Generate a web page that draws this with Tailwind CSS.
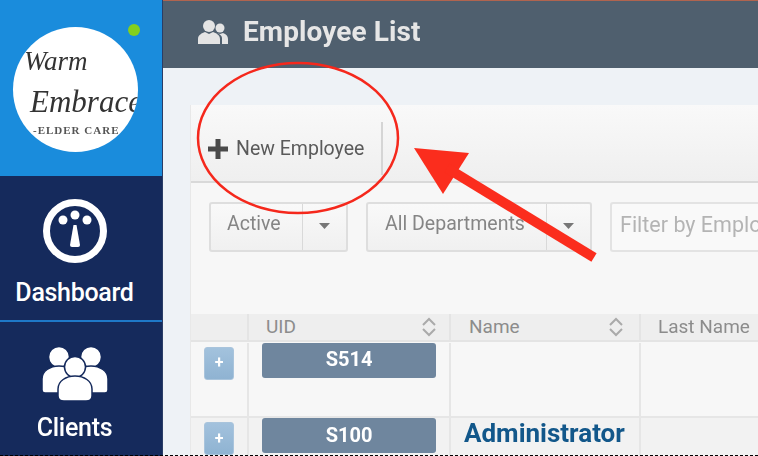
<!DOCTYPE html>
<html>
<head>
<meta charset="utf-8">
<script src="https://cdn.jsdelivr.net/npm/@tailwindcss/browser@4"></script>
</head>
<body class="m-0">
<div class="relative w-[758px] h-[456px] overflow-hidden bg-[#eef2f6] font-['Roboto',sans-serif]">
  <div class="flex w-full h-full blur-[0.6px]">
    <aside class="w-[163px] shrink-0 flex flex-col bg-[#152a5c] text-white border-r border-[#2a3d66]">
      <div class="relative h-[176px] bg-[#1a8cdc] pt-[27px] pl-[13px]">
        <div class="w-[125px] h-[125px] rounded-full bg-white overflow-hidden relative text-[#333] font-['Liberation_Serif',serif]">
          <div class="pt-[20px] pl-[11px] italic text-[27px] leading-[28px] whitespace-nowrap">Warm</div>
          <div class="pl-[17px] mt-[11px] italic text-[31px] leading-[32px] whitespace-nowrap">Embrace</div>
          <div class="pl-[20px] mt-[5px] text-[11px] leading-[14px] tracking-[1px] font-bold whitespace-nowrap text-[#555]">-ELDER CARE</div>
        </div>
        <div class="absolute left-[128px] top-[24px] w-3 h-3 rounded-full bg-[#84cf1e]"></div>
      </div>
      <div class="h-[146px] flex flex-col items-center border-b-2 border-[#1e78c8] pr-[13px]">
        <svg class="mt-[22px]" width="66" height="66" viewBox="0 0 66 66" fill="white">
          <circle cx="33" cy="33" r="28.500" fill="none" stroke="white" stroke-width="7"/>
          <circle cx="21" cy="22" r="4.500"/><circle cx="33" cy="17" r="4.500"/><circle cx="45" cy="22" r="4.500"/>
          <path d="M31.500 27h3l3.500 20q0 2-2 2h-6q-2 0-2-2z"/>
        </svg>
        <div class="mt-[14px] text-[25px] leading-[30px] font-medium tracking-[-0.3px]">Dashboard</div>
      </div>
      <div class="flex-1 flex flex-col items-center pr-[13px]">
        <svg class="mt-[24px]" width="68" height="58" viewBox="-1 0 68 58" fill="white" stroke="#152a5c" stroke-width="1.500">
          <circle cx="17" cy="11" r="10.500"/><circle cx="49" cy="11" r="10.500"/>
          <path d="M0 33c0-8 8-13 17-13s16 5 16 13v14H3q-3 0-3-3z"/>
          <path d="M66 33c0-8-8-13-17-13s-16 5-16 13v14h30q3 0 3-3z"/>
          <circle cx="33" cy="21" r="10.500"/>
          <path d="M16 43c0-8 8-13 17-13s17 5 17 13v7q0 5-6 5H22q-6 0-6-5z"/>
        </svg>
        <div class="mt-[9px] text-[25px] leading-[30px] font-medium tracking-[-0.3px]">Clients</div>
      </div>
    </aside>
    <main class="flex-1 min-w-0 flex flex-col">
      <header class="h-[68px] shrink-0 bg-[#4f5f6e] flex items-center pl-[35px] pb-[6px] border-t border-[#b0644f]">
        <svg width="30" height="26" viewBox="0 0 30 26" fill="#e4e4e4">
          <circle cx="11" cy="7" r="6"/>
          <path d="M0 25v-5c0-4 4-6 7-7l4 2 4-2c3 1 7 3 7 7v5z"/>
          <circle cx="22" cy="9" r="4.500"/>
          <path d="M19 14l3 1 3-1c3 1 5 3 5 6v5h-6v-6c0-2-2-4-5-5z"/>
        </svg>
        <h1 class="ml-[15px] text-[28px] leading-none font-bold text-[#e6e6e6] tracking-[0.1px]">Employee List</h1>
      </header>
      <section class="ml-[27px] mt-[37px] flex-1 min-h-0 bg-[#f7f7f7] border-l border-[#e8e8e8] flex flex-col">
        <div class="h-[78px] shrink-0 border-b-2 border-[#d9d9d9] bg-gradient-to-b from-[#f9f9f9] to-[#efefef] pt-[17px]">
          <div class="w-[192px] h-[53px] border-r-2 border-[#d5d5d5] flex items-center pl-[17px]">
            <svg width="20" height="20" viewBox="0 0 20 20" fill="#4a4a4a"><path d="M7.500 0h5v7.500H20v5h-7.500V20h-5v-7.500H0v-5h7.500z"/></svg>
            <span class="ml-[8px] text-[19.5px] leading-none text-[#5a5a5a]">New Employee</span>
          </div>
        </div>
        <div class="h-[131px] shrink-0 flex gap-[18px] pt-[19px] pl-[18px]">
          <div class="w-[139px] h-[50px] rounded-[3px] border-2 border-[#dedede] bg-gradient-to-b from-[#f9f9f9] to-[#f0f0f0] flex">
            <div class="w-[92px] flex items-center pl-[16px] pb-[6px] text-[19.5px] text-[#858585] border-r border-[#d9d9d9]">Active</div>
            <div class="flex-1 flex items-center justify-center pb-[2px]"><div class="w-[11px] h-[6px] bg-[#777] [clip-path:polygon(0_0,100%_0,50%_100%)]"></div></div>
          </div>
          <div class="w-[226px] h-[50px] rounded-[3px] border-2 border-[#dedede] bg-gradient-to-b from-[#f9f9f9] to-[#f0f0f0] flex">
            <div class="w-[179px] flex items-center pl-[17px] pb-[6px] text-[19.5px] text-[#858585] border-r border-[#d9d9d9] whitespace-nowrap">All Departments</div>
            <div class="flex-1 flex items-center justify-center pb-[2px]"><div class="w-[11px] h-[6px] bg-[#777] [clip-path:polygon(0_0,100%_0,50%_100%)]"></div></div>
          </div>
          <div class="flex-1 h-[50px] rounded-l-[3px] border-2 border-r-0 border-[#e3e3e3] bg-[#f9f9f9] flex items-center pl-[8px] pb-[4px] text-[21.5px] text-[#b4b4b4] whitespace-nowrap overflow-hidden">Filter by Employee</div>
        </div>
        <div class="grid grid-cols-[58px_202px_190px_1fr] flex-1 min-h-0 text-[19px]">
          <div class="h-[28px] bg-[#eeeeee] border-b-2 border-r-2 border-[#e4e4e4]"></div>
          <div class="h-[28px] bg-[#eeeeee] border-b-2 border-r-2 border-[#e4e4e4] flex items-center justify-between pl-[17px] pr-[13px] text-[#8c8c8c]">
            <span>UID</span>
            <svg width="14" height="20" viewBox="0 0 14 20" fill="none" stroke="#aaa" stroke-width="2"><path d="M1 8l6-6 6 6M1 12l6 6 6-6"/></svg>
          </div>
          <div class="h-[28px] bg-[#eeeeee] border-b-2 border-r-2 border-[#e4e4e4] flex items-center justify-between pl-[18px] pr-[16px] text-[#8c8c8c]">
            <span>Name</span>
            <svg width="14" height="20" viewBox="0 0 14 20" fill="none" stroke="#aaa" stroke-width="2"><path d="M1 8l6-6 6 6M1 12l6 6 6-6"/></svg>
          </div>
          <div class="h-[28px] bg-[#eeeeee] border-b-2 border-[#e4e4e4] flex items-center pl-[17px] text-[#8c8c8c] whitespace-nowrap">Last Name</div>

          <div class="h-[75px] border-r-2 border-b-2 border-[#e6e6e6] pl-[13px] pt-[4px]">
            <div class="w-[30px] h-[33px] rounded-[3px] border border-[#a9c4dc] bg-gradient-to-b from-[#a3c2dd] to-[#8fb3d2] flex items-center justify-center text-white text-[16px] font-bold leading-none">+</div>
          </div>
          <div class="h-[75px] border-r-2 border-b-2 border-[#e6e6e6] pl-[13px]">
            <div class="w-[174px] h-[35px] rounded-[3px] bg-[#6f869e] text-white font-bold text-[20px] pb-[3px] flex items-center justify-center">S514</div>
          </div>
          <div class="h-[75px] border-r-2 border-b-2 border-[#e6e6e6]"></div>
          <div class="h-[75px] border-b-2 border-[#e6e6e6]"></div>

          <div class="bg-[#f2f2f2] border-r-2 border-[#e6e6e6] pl-[13px] pt-[4px]">
            <div class="w-[30px] h-[33px] rounded-[3px] border border-[#a9c4dc] bg-gradient-to-b from-[#a3c2dd] to-[#8fb3d2] flex items-center justify-center text-white text-[16px] font-bold leading-none">+</div>
          </div>
          <div class="bg-[#f2f2f2] border-r-2 border-[#e6e6e6] pl-[13px]">
            <div class="w-[174px] h-[35px] rounded-[3px] bg-[#6f869e] text-white font-bold text-[20px] pb-[2px] flex items-center justify-center">S100</div>
          </div>
          <div class="bg-[#f2f2f2] border-r-2 border-[#e6e6e6] pl-[13px] text-[26px] leading-[30px] font-bold text-[#12578a] whitespace-nowrap">Administrator</div>
          <div class="bg-[#f2f2f2]"></div>
        </div>
      </section>
    </main>
  </div>
  <svg class="absolute left-0 top-0 pointer-events-none blur-[0.4px]" width="758" height="456" viewBox="0 0 758 456" fill="none">
    <ellipse cx="298" cy="138" rx="100" ry="75" stroke="#f5281c" stroke-width="2.500"/>
    <path d="M414 148L469 153L443 194Z" fill="#fb2d1d"/>
    <path d="M447 168L594 257.500" stroke="#fb2d1d" stroke-width="10"/>
  </svg>
  <div class="absolute left-0 right-0 bottom-0 h-[1px] border-b border-dashed border-black"></div>
</div>
</body>
</html>
